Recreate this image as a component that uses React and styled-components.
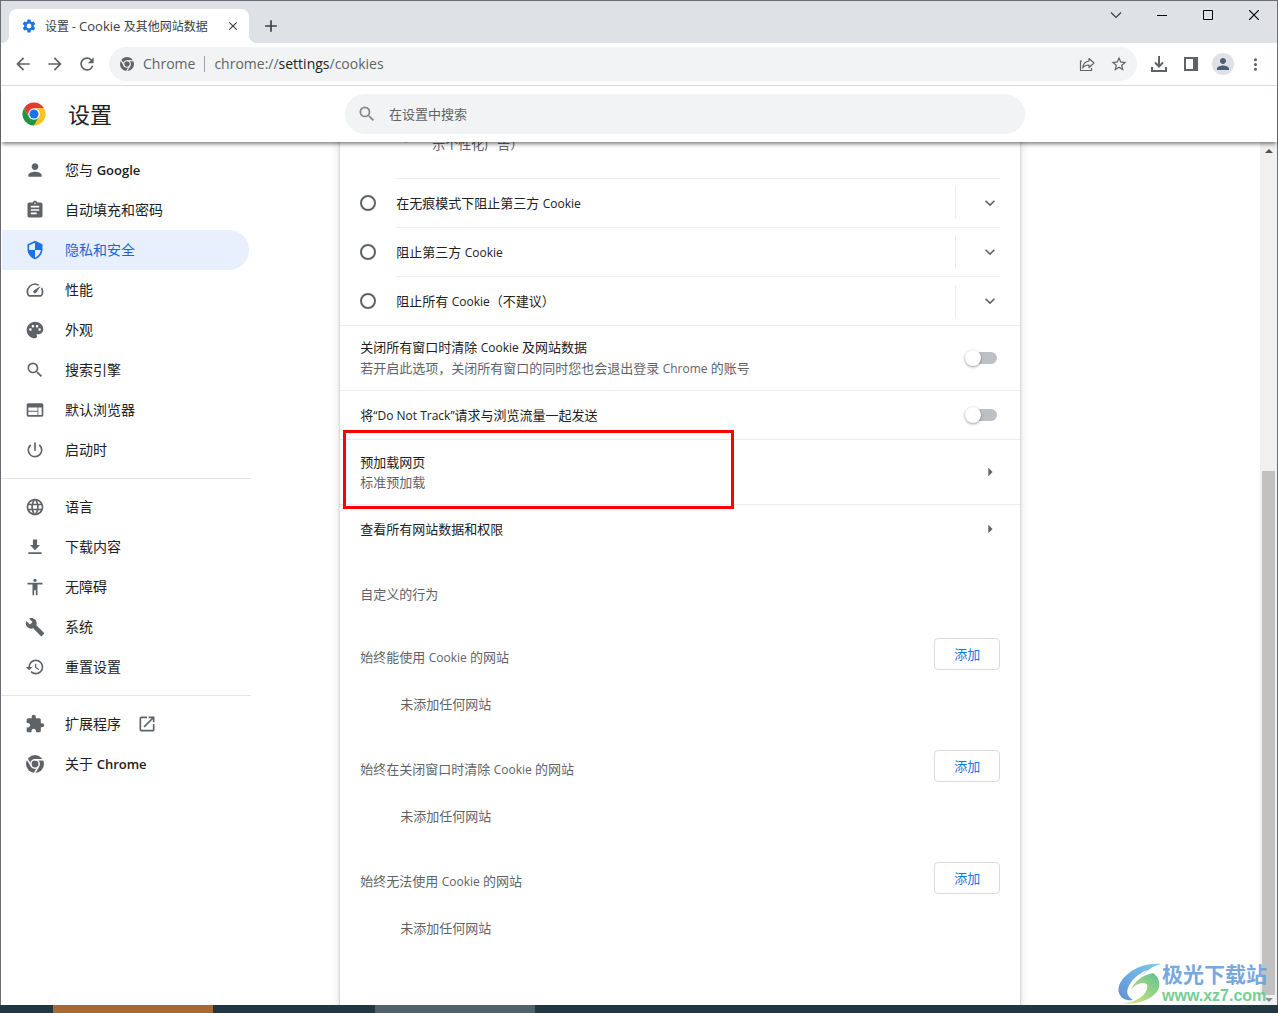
import React, { useState } from 'react';
import styled, { createGlobalStyle } from 'styled-components';
import {
  MdPerson, MdAssignment, MdSecurity, MdSpeed, MdPalette, MdSearch, MdWeb,
  MdPowerSettingsNew, MdLanguage, MdAccessibility, MdBuild, MdHistory,
  MdExtension, MdOpenInNew, MdExpandMore, MdArrowRight, MdArrowBack,
  MdArrowForward, MdRefresh, MdStarBorder, MdMoreVert, MdSettings, MdClose,
  MdAdd, MdCookie,
} from 'react-icons/md';

const GlobalStyle = createGlobalStyle`
  * {
    box-sizing: border-box;
  }
  body {
    margin: 0;
    font-family: 'Open Sans', 'Noto Sans CJK SC', sans-serif;
    font-size: 13px;
    line-height: 20px;
    color: #202124;
  }
  button {
    font: inherit;
    color: inherit;
    border: none;
    background: none;
    padding: 0;
    cursor: pointer;
  }
  svg {
    display: block;
    flex-shrink: 0;
  }
`;

const Desktop = styled.div`
  min-height: 100vh;
  display: flex;
  flex-direction: column;
`;

const Window = styled.div`
  flex: 1;
  display: flex;
  flex-direction: column;
  position: relative;
  background: #fff;
  border: 1px solid #6b6e72;
  border-bottom: none;
`;

/* ---------- tab strip ---------- */

const TabStrip = styled.div`
  height: 42px;
  display: flex;
  align-items: flex-end;
  padding-left: 8px;
  background: #dee1e6;
`;

const Tab = styled.div`
  position: relative;
  width: 240px;
  height: 34px;
  display: flex;
  align-items: center;
  gap: 8px;
  padding: 0 8px 0 12px;
  background: #fff;
  border-radius: 8px 8px 0 0;
  font-size: 12px;
  color: #3c4043;

  &::before,
  &::after {
    content: '';
    position: absolute;
    bottom: 0;
    width: 8px;
    height: 8px;
  }
  &::before {
    left: -8px;
    background: radial-gradient(circle at 0 0, transparent 8px, #fff 8px);
  }
  &::after {
    right: -8px;
    background: radial-gradient(circle at 100% 0, transparent 8px, #fff 8px);
  }
`;

const TabTitle = styled.span`
  flex: 1;
  white-space: nowrap;
  overflow: hidden;
`;

const TabButton = styled.button`
  display: grid;
  place-items: center;
  width: 16px;
  height: 16px;
`;

const NewTab = styled.button`
  display: grid;
  place-items: center;
  width: 28px;
  height: 34px;
  margin-left: 8px;
  color: #3c4043;
`;

const WindowControls = styled.div`
  display: flex;
  align-self: flex-start;
  margin-left: auto;
`;

const WindowButton = styled.button`
  display: grid;
  place-items: center;
  width: 46px;
  height: 28px;
`;

/* ---------- toolbar ---------- */

const Toolbar = styled.div`
  height: 43px;
  display: flex;
  align-items: center;
  padding: 0 6px;
  border-bottom: 1px solid #dadce0;
  color: #5f6368;
`;

const ToolButton = styled.button`
  display: grid;
  place-items: center;
  width: 32px;
  height: 32px;
`;

const Omnibox = styled.div`
  flex: 1;
  display: flex;
  align-items: center;
  height: 34px;
  margin: 0 6px;
  padding: 0 2px 0 11px;
  border-radius: 17px;
  background: #f1f3f4;
  font-size: 14px;
`;

const SiteChip = styled.span`
  display: flex;
  align-items: center;
  gap: 9px;
  padding-right: 9px;
  margin-right: 9px;
  height: 16px;
  border-right: 1px solid #9aa0a6;
`;

const Address = styled.div`
  flex: 1;
  outline: none;
  b {
    font-weight: 400;
    color: #202124;
  }
`;

const Avatar = styled.span`
  display: grid;
  place-items: center;
  width: 22px;
  height: 22px;
  border-radius: 50%;
  background: #dee1e6;
  color: #4e5d73;
`;

/* ---------- settings header ---------- */

const columns = '250px 19fr minmax(0, 680px) 51fr';

const Header = styled.header`
  position: relative;
  z-index: 1;
  height: 56px;
  display: grid;
  grid-template-columns: ${columns};
  align-items: center;
  background: #fff;
  box-shadow: 0 3px 4px -1px rgba(0, 0, 0, 0.5);
`;

const Brand = styled.div`
  display: flex;
  align-items: center;
  gap: 22px;
  padding-left: 21px;
`;

const Title = styled.h1`
  margin: 0;
  font-size: 22px;
  line-height: 32px;
  font-weight: 400;
`;

const SearchBox = styled.label`
  grid-column: 3;
  display: flex;
  align-items: center;
  gap: 12px;
  height: 40px;
  padding: 0 12px;
  border-radius: 20px;
  background: #f1f3f4;
  color: #80868b;

  input {
    flex: 1;
    padding: 0;
    border: none;
    outline: none;
    background: none;
    font: inherit;
    color: #202124;
  }
  input::placeholder {
    color: #5f6368;
    opacity: 1;
  }
`;

/* ---------- body ---------- */

const Body = styled.div`
  flex: 1;
  display: flex;
  overflow: hidden;
`;

const Content = styled.div`
  flex: 1;
  display: grid;
  grid-template-columns: ${columns};
`;

const Sidebar = styled.nav`
  padding-top: 8px;
`;

const MenuItem = styled.a`
  display: flex;
  align-items: center;
  gap: 20px;
  height: 40px;
  margin: 0 2px 0 1px;
  padding-left: 23px;
  border-radius: 0 20px 20px 0;
  font-size: 14px;
  text-decoration: none;
  color: ${props => (props.$active ? '#1967d2' : '#202124')};
  background: ${props => (props.$active ? '#e8f0fe' : 'transparent')};

  svg {
    color: ${props => (props.$active ? '#1a73e8' : '#5f6368')};
  }
`;

const MenuLabel = styled.span`
  display: flex;
  align-items: center;
  gap: 16px;
`;

const MenuDivider = styled.hr`
  margin: 8px 0;
  border: none;
  border-top: 1px solid #e4e5e7;
`;

const Card = styled.main`
  grid-column: 3;
  margin-top: -18px;
  background: #fff;
  box-shadow: 0 1px 2px rgba(60, 64, 67, 0.3), 0 2px 6px 2px rgba(60, 64, 67, 0.15);
`;

const Bullet = styled.div`
  display: flex;
  align-items: flex-start;
  gap: 16px;
  padding: 0 20px 24px 56px;
  color: #5f6368;

  p {
    margin: 10px 0 0;
  }
`;

const RadioRow = styled.div`
  display: flex;
  align-items: center;
  gap: 20px;
  padding: 0 20px;
`;

const Radio = styled.input`
  appearance: none;
  width: 16px;
  height: 16px;
  margin: 0;
  border: 2px solid #5f6368;
  border-radius: 50%;

  &:checked {
    border: 5px solid #1a73e8;
  }
`;

const RadioBody = styled.div`
  flex: 1;
  display: flex;
  align-items: center;
  height: 49px;
  border-top: 1px solid #ececee;

  label {
    flex: 1;
  }
`;

const ExpandButton = styled.button`
  display: flex;
  align-items: center;
  justify-content: flex-end;
  width: 45px;
  height: 32px;
  border-left: 1px solid #ececee;
  color: #5f6368;
`;

const SettingRow = styled.div`
  position: relative;
  display: flex;
  align-items: center;
  justify-content: space-between;
  height: ${props => (props.$tall ? 65 : 49)}px;
  padding: 0 20px;
  border-top: 1px solid #ececee;
`;

const Secondary = styled.div`
  color: #5f6368;
`;

const Toggle = styled.input`
  appearance: none;
  position: relative;
  width: 32px;
  height: 16px;
  margin: 0 3px 0 0;

  &::before {
    content: '';
    position: absolute;
    top: 2px;
    left: 4px;
    right: 0;
    height: 12px;
    border-radius: 6px;
    background: #bdc1c6;
  }
  &::after {
    content: '';
    position: absolute;
    top: 0;
    left: 0;
    width: 16px;
    height: 16px;
    border-radius: 50%;
    background: #fff;
    box-shadow: 0 1px 3px rgba(0, 0, 0, 0.4);
  }
  &:checked::before {
    background: #8ab4f8;
  }
  &:checked::after {
    left: 16px;
    background: #1a73e8;
  }
`;

const ArrowButton = styled.button`
  color: #5f6368;
`;

const Highlight = styled.div`
  position: absolute;
  z-index: 1;
  top: -10px;
  bottom: -5px;
  left: 3px;
  width: 391px;
  border: 3px solid #fe0000;
  pointer-events: none;
`;

const SectionTitle = styled.h2`
  margin: 0;
  padding: 31px 20px 22px;
  font-size: 13px;
  font-weight: 400;
  color: #5f6368;
`;

const SiteList = styled.section`
  padding: 12px 20px 24px;
  color: #5f6368;
`;

const SiteListHeader = styled.div`
  display: flex;
  align-items: flex-end;
  justify-content: space-between;
  line-height: 24px;
`;

const AddButton = styled.button`
  width: 66px;
  height: 32px;
  border: 1px solid #dadce0;
  border-radius: 4px;
  color: #1a73e8;
`;

const EmptyText = styled.p`
  margin: 24px 0 0 40px;
`;

/* ---------- scrollbar, taskbar, watermark ---------- */

const ScrollTrack = styled.div`
  width: 17px;
  display: flex;
  flex-direction: column;
  background: #f0f0f0;
`;

const ScrollArrow = styled.div`
  display: grid;
  place-items: center;
  height: ${props => props.$size}px;
  color: ${props => props.$color};
`;

const ScrollSpace = styled.div`
  flex: 312;
`;

const ScrollThumb = styled.div`
  flex: 524;
  margin: 0 2px;
  background: #c1c1c1;
`;

const Taskbar = styled.div`
  height: 8px;
  display: flex;
  background: #213742;
`;

const TaskItem = styled.div`
  width: 160px;
  margin-left: ${props => props.$gap}px;
  background: ${props => props.$color};
`;

const Watermark = styled.div`
  position: absolute;
  right: 10px;
  bottom: 0;
  z-index: 2;
  display: flex;
  align-items: center;
  opacity: 0.9;
`;

const WatermarkText = styled.div`
  display: flex;
  flex-direction: column;
  font-family: 'Liberation Sans', 'Noto Sans CJK SC', sans-serif;
  font-size: 21px;
  line-height: 24px;
  font-weight: 700;
  color: #69a0dc;

  span:last-child {
    font-size: 16px;
    line-height: 18px;
    color: #67c986;
  }
`;

// Latin runs are set apart in size from the Chinese around them
const LatinRun = styled.span`
  font-size: ${props => props.$size}px;
`;

function Mixed({ children, size = 12 }) {
  return children
    .split(/([A-Za-z“”][A-Za-z“” ]*)/)
    .map((part, i) => (i % 2 ? <LatinRun key={i} $size={size}>{part}</LatinRun> : part));
}

const DownloadIcon = () => (
  <svg width="20" height="20" viewBox="0 0 24 24" fill="currentColor">
    <path d="M4 20.500h16v-2.200H4v2.200zM18 9.500h-3.500V3h-5v6.500H6l6 6.500z" />
  </svg>
);

const TrayIcon = () => (
  <svg width="18" height="18" viewBox="0 0 18 18" fill="none" stroke="currentColor" strokeWidth="2">
    <path d="M9 1v10M5 7.500l4 4 4-4M2 12v4h14v-4" />
  </svg>
);

const PanelIcon = () => (
  <svg width="14" height="14" viewBox="0 0 14 14">
    <path d="M1 1h12v12H1z" fill="none" stroke="currentColor" strokeWidth="2" />
    <path d="M9 1h4v12H9z" fill="currentColor" />
  </svg>
);

const ShareIcon = () => (
  <svg width="16" height="16" viewBox="0 0 16 16" fill="none" stroke="currentColor" strokeWidth="1.200">
    <path d="M3 5H1.500v9.500h11V12" />
    <path d="M10 2.500L15 7l-5 4.500V9C7 9 5 10 3.700 12 4 8.500 6 5.500 10 5z" strokeLinejoin="round" />
  </svg>
);

const ChromeIcon = ({ size = 18, gap = '#fff' }) => (
  <svg width={size} height={size} viewBox="0 0 24 24">
    <circle cx="12" cy="12" r="12" fill="currentColor" />
    <g fill="none" stroke={gap} strokeWidth="2">
      <circle cx="12" cy="12" r="5.600" />
      <path d="M12 6.400h12" />
      <path d="M12 6.400h12" transform="rotate(120 12 12)" />
      <path d="M12 6.400h12" transform="rotate(240 12 12)" />
    </g>
  </svg>
);

const ChromeLogo = () => (
  <svg width="24" height="24" viewBox="0 0 50 50">
    <g transform="translate(1 1)">
      <circle cx="24" cy="24" r="12" fill="#fff" />
      <path fill="#e33b2e" d="M24 12h20.781a23.994 23.994 0 0 0-41.564.003L13.608 30l.009-.002A11.985 11.985 0 0 1 24 12z" />
      <circle cx="24" cy="24" r="9.500" fill="#1a73e8" />
      <path fill="#fcc31e" d="M34.391 30.003L24 48A23.994 23.994 0 0 0 44.780 12H23.999l-.003.010a11.985 11.985 0 0 1 10.395 17.993z" />
      <path fill="#229342" d="M13.609 30.003L3.218 12.006A23.994 23.994 0 0 0 24.003 48l10.391-17.998-.007-.007a11.985 11.985 0 0 1-20.778.008z" />
    </g>
  </svg>
);

const WatermarkLogo = () => (
  <svg width="44" height="42" viewBox="0 0 44 42">
    <defs>
      <linearGradient id="swirlBlue" x1="0" y1="1" x2="1" y2="0">
        <stop offset="0" stopColor="#4f86d0" />
        <stop offset="1" stopColor="#6cc6ea" />
      </linearGradient>
      <linearGradient id="swirlGreen" x1="0" y1="1" x2="1" y2="0">
        <stop offset="0" stopColor="#e2e66e" />
        <stop offset="1" stopColor="#4dbb84" />
      </linearGradient>
    </defs>
    <path fill="url(#swirlBlue)" d="M43 1C32 0 20 3 11 10 3 16-1 24 1 30c2 6 8 8 14 7-5-3-7-7-5-12 3-8 10-14 19-18l-6 6C29 8 34 3 43 1z" />
    <path fill="url(#swirlGreen)" d="M13 26c4-8 12-14 22-16 6 4 8 11 5 17-5 9-20 15-37 14 9-1 19-4 24-11 4-6 3-10-2-10-4 0-8 2-12 6z" />
  </svg>
);

const menuGroups = [
  [
    { icon: MdPerson, label: '您与 Google' },
    { icon: MdAssignment, label: '自动填充和密码' },
    { icon: MdSecurity, label: '隐私和安全', active: true },
    { icon: MdSpeed, label: '性能' },
    { icon: MdPalette, label: '外观' },
    { icon: MdSearch, label: '搜索引擎' },
    { icon: MdWeb, label: '默认浏览器' },
    { icon: MdPowerSettingsNew, label: '启动时' },
  ],
  [
    { icon: MdLanguage, label: '语言' },
    { icon: DownloadIcon, label: '下载内容' },
    { icon: MdAccessibility, label: '无障碍' },
    { icon: MdBuild, label: '系统' },
    { icon: MdHistory, label: '重置设置' },
  ],
  [
    { icon: MdExtension, label: '扩展程序', external: true },
    { icon: ChromeIcon, label: '关于 Chrome', size: 18 },
  ],
];

const radioOptions = [
  '在无痕模式下阻止第三方 Cookie',
  '阻止第三方 Cookie',
  '阻止所有 Cookie（不建议）',
];

const siteLists = [
  '始终能使用 Cookie 的网站',
  '始终在关闭窗口时清除 Cookie 的网站',
  '始终无法使用 Cookie 的网站',
];

const MenuIcon = styled.span`
  display: grid;
  place-items: center;
  width: 20px;
`;

const MenuText = styled.span`
  ${LatinRun} {
    font-weight: 600;
  }
`;

function SideMenu() {
  return (
    <Sidebar>
      {menuGroups.map((group, index) => (
        <React.Fragment key={index}>
          {index > 0 && <MenuDivider />}
          {group.map(({ icon: Icon, label, active, external, size = 20 }) => (
            <MenuItem key={label} href="#" $active={active}>
              <MenuIcon><Icon size={size} /></MenuIcon>
              <MenuLabel>
                <MenuText><Mixed size={13}>{label}</Mixed></MenuText>
                {external && <MdOpenInNew size={20} />}
              </MenuLabel>
            </MenuItem>
          ))}
        </React.Fragment>
      ))}
    </Sidebar>
  );
}

const App = () => {
  const [cookieMode, setCookieMode] = useState(null);

  return (
    <Desktop>
      <GlobalStyle />
      <Window>
        <TabStrip>
          <Tab>
            <MdSettings size={16} color="#1a73e8" />
            <TabTitle><Mixed size={13}>设置 - Cookie 及其他网站数据</Mixed></TabTitle>
            <TabButton aria-label="关闭标签页"><MdClose size={14} /></TabButton>
          </Tab>
          <NewTab aria-label="新标签页"><MdAdd size={20} /></NewTab>
          <WindowControls>
            <WindowButton aria-label="搜索标签页">
              <svg width="12" height="8" viewBox="0 0 12 8" fill="none" stroke="#3c4043" strokeWidth="1.200">
                <path d="M1 1.500l5 5 5-5" />
              </svg>
            </WindowButton>
            <WindowButton aria-label="最小化">
              <svg width="10" height="10" viewBox="0 0 10 10"><path d="M0 5h10v1H0z" /></svg>
            </WindowButton>
            <WindowButton aria-label="最大化">
              <svg width="10" height="10" viewBox="0 0 10 10" fill="none" stroke="#000">
                <path d="M.5.5h9v9h-9z" />
              </svg>
            </WindowButton>
            <WindowButton aria-label="关闭">
              <svg width="10" height="10" viewBox="0 0 10 10" fill="none" stroke="#000" strokeWidth="1.200">
                <path d="M0 0l10 10M10 0L0 10" />
              </svg>
            </WindowButton>
          </WindowControls>
        </TabStrip>

        <Toolbar>
          <ToolButton aria-label="返回"><MdArrowBack size={20} /></ToolButton>
          <ToolButton aria-label="前进"><MdArrowForward size={20} /></ToolButton>
          <ToolButton aria-label="重新加载"><MdRefresh size={20} /></ToolButton>
          <Omnibox>
            <SiteChip><ChromeIcon size={14} gap="#f1f3f4" />Chrome</SiteChip>
            <Address role="textbox" aria-label="地址" tabIndex={0}>
              chrome://<b>settings</b>/cookies
            </Address>
            <ToolButton aria-label="分享"><ShareIcon /></ToolButton>
            <ToolButton aria-label="收藏"><MdStarBorder size={18} /></ToolButton>
          </Omnibox>
          <ToolButton aria-label="下载"><TrayIcon /></ToolButton>
          <ToolButton aria-label="侧边栏"><PanelIcon /></ToolButton>
          <ToolButton aria-label="用户"><Avatar><MdPerson size={18} /></Avatar></ToolButton>
          <ToolButton aria-label="更多"><MdMoreVert size={19} /></ToolButton>
        </Toolbar>

        <Header>
          <Brand>
            <ChromeLogo />
            <Title>设置</Title>
          </Brand>
          <SearchBox>
            <MdSearch size={20} />
            <input type="text" placeholder="在设置中搜索" aria-label="在设置中搜索" />
          </SearchBox>
        </Header>

        <Body>
          <Content>
            <SideMenu />
            <Card>
              <Bullet>
                <MdCookie size={20} />
                <p>示个性化广告）</p>
              </Bullet>

              {radioOptions.map((option, index) => (
                <RadioRow key={option}>
                  <Radio
                    type="radio"
                    name="cookies"
                    id={`cookies-${index}`}
                    checked={cookieMode === index}
                    onChange={() => setCookieMode(index)}
                  />
                  <RadioBody>
                    <label htmlFor={`cookies-${index}`}><Mixed>{option}</Mixed></label>
                    <ExpandButton aria-label="展开"><MdExpandMore size={20} /></ExpandButton>
                  </RadioBody>
                </RadioRow>
              ))}

              <SettingRow $tall>
                <label htmlFor="clear-on-exit">
                  <div><Mixed>关闭所有窗口时清除 Cookie 及网站数据</Mixed></div>
                  <Secondary><Mixed>若开启此选项，关闭所有窗口的同时您也会退出登录 Chrome 的账号</Mixed></Secondary>
                </label>
                <Toggle type="checkbox" id="clear-on-exit" />
              </SettingRow>
              <SettingRow>
                <label htmlFor="do-not-track"><Mixed>将“Do Not Track”请求与浏览流量一起发送</Mixed></label>
                <Toggle type="checkbox" id="do-not-track" />
              </SettingRow>
              <SettingRow $tall>
                <div>
                  <div>预加载网页</div>
                  <Secondary>标准预加载</Secondary>
                </div>
                <ArrowButton aria-label="预加载网页"><MdArrowRight size={20} /></ArrowButton>
                <Highlight />
              </SettingRow>
              <SettingRow>
                <div>查看所有网站数据和权限</div>
                <ArrowButton aria-label="查看所有网站数据和权限"><MdArrowRight size={20} /></ArrowButton>
              </SettingRow>

              <SectionTitle>自定义的行为</SectionTitle>
              {siteLists.map(title => (
                <SiteList key={title}>
                  <SiteListHeader>
                    <span><Mixed>{title}</Mixed></span>
                    <AddButton>添加</AddButton>
                  </SiteListHeader>
                  <EmptyText>未添加任何网站</EmptyText>
                </SiteList>
              ))}
            </Card>
          </Content>
          <ScrollTrack>
            <ScrollArrow $size={17} $color="#505050">
              <svg width="8" height="4" viewBox="0 0 8 4" fill="currentColor"><path d="M4 0l4 4H0z" /></svg>
            </ScrollArrow>
            <ScrollSpace />
            <ScrollThumb />
            <ScrollArrow $size={10} $color="#8a8f96">
              <svg width="8" height="4" viewBox="0 0 8 4" fill="currentColor"><path d="M4 4l4-4H0z" /></svg>
            </ScrollArrow>
          </ScrollTrack>
        </Body>

        <Watermark>
          <WatermarkLogo />
          <WatermarkText>
            <span>极光下载站</span>
            <span>www.xz7.com</span>
          </WatermarkText>
        </Watermark>
      </Window>
      <Taskbar>
        <TaskItem $gap={53} $color="#a86a33" />
        <TaskItem $gap={162} $color="#50626b" />
      </Taskbar>
    </Desktop>
  );
};

export default App;
